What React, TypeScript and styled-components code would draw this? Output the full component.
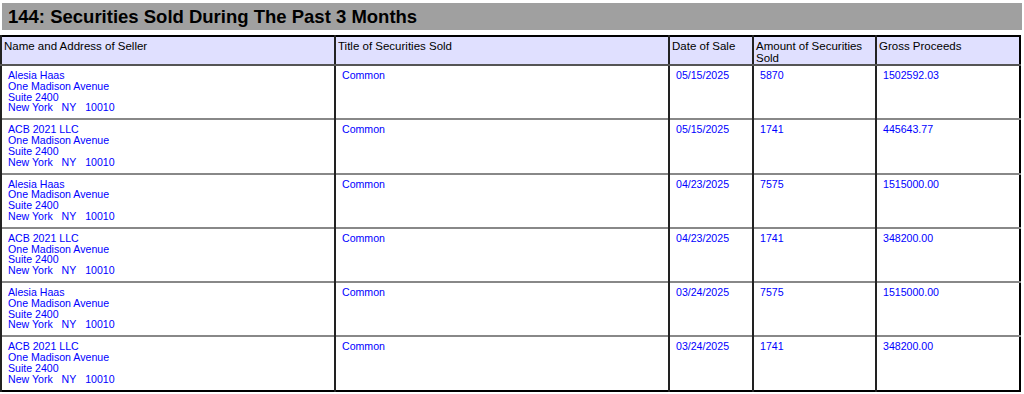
import React from "react";
import styled, { createGlobalStyle } from "styled-components";

const Global = createGlobalStyle`
  html, body { margin: 0; padding: 0; background: #fff; }
  body { font-family: "Liberation Sans", Arial, sans-serif; }
`;

const Page = styled.div`
  padding: 3px 0 0 0;
  width: 1022px;
  box-sizing: border-box;
`;

const TitleBar = styled.h2`
  margin: 0 0 5px 2px;
  background: #a0a0a0;
  color: #000;
  font-size: 18.5px;
  font-weight: bold;
  line-height: 27px;
  padding: 0 6px;
  height: 27px;
`;

const Table = styled.table`
  width: 1019px;
  border-collapse: collapse;
  border: 2px solid #000;
  table-layout: fixed;
`;

const Th = styled.th<{ $w: number }>`
  box-sizing: border-box;
  width: ${(p) => p.$w}px;
  background: #e0e0ff;
  color: #000;
  font-weight: normal;
  font-size: 11.5px;
  line-height: 12px;
  text-align: left;
  vertical-align: top;
  padding: 3px 2px 0;
  height: 27px;
  border-left: 2px solid #222;
  border-bottom: 2px solid #555;
`;

const Td = styled.td`
  color: #0000ff;
  font-size: 10.6px;
  line-height: 10.75px;
  vertical-align: top;
  padding: 4px 6px 0;
  height: 48.3px;
  border-left: 2px solid #222;
  border-top: 2px solid #888;
`;

const rows = [
  ["Alesia Haas", "05/15/2025", "5870", "1502592.03"],
  ["ACB 2021 LLC", "05/15/2025", "1741", "445643.77"],
  ["Alesia Haas", "04/23/2025", "7575", "1515000.00"],
  ["ACB 2021 LLC", "04/23/2025", "1741", "348200.00"],
  ["Alesia Haas", "03/24/2025", "7575", "1515000.00"],
  ["ACB 2021 LLC", "03/24/2025", "1741", "348200.00"],
];

export default function App() {
  return (
    <>
      <Global />
      <Page>
        <TitleBar>144: Securities Sold During The Past 3 Months</TitleBar>
        <Table>
          <thead>
            <tr>
              <Th $w={334}>Name and Address of Seller</Th>
              <Th $w={334}>Title of Securities Sold</Th>
              <Th $w={84}>Date of Sale</Th>
              <Th $w={123}>Amount of Securities Sold</Th>
              <Th $w={144}>Gross Proceeds</Th>
            </tr>
          </thead>
          <tbody>
            {rows.map((r, i) => (
              <tr key={i}>
                <Td>
                  {r[0]}
                  <br />
                  One Madison Avenue
                  <br />
                  Suite 2400
                  <br />
                  New York&nbsp;&nbsp;&nbsp;NY&nbsp;&nbsp;&nbsp;10010
                </Td>
                <Td>Common</Td>
                <Td>{r[1]}</Td>
                <Td>{r[2]}</Td>
                <Td>{r[3]}</Td>
              </tr>
            ))}
          </tbody>
        </Table>
      </Page>
    </>
  );
}
